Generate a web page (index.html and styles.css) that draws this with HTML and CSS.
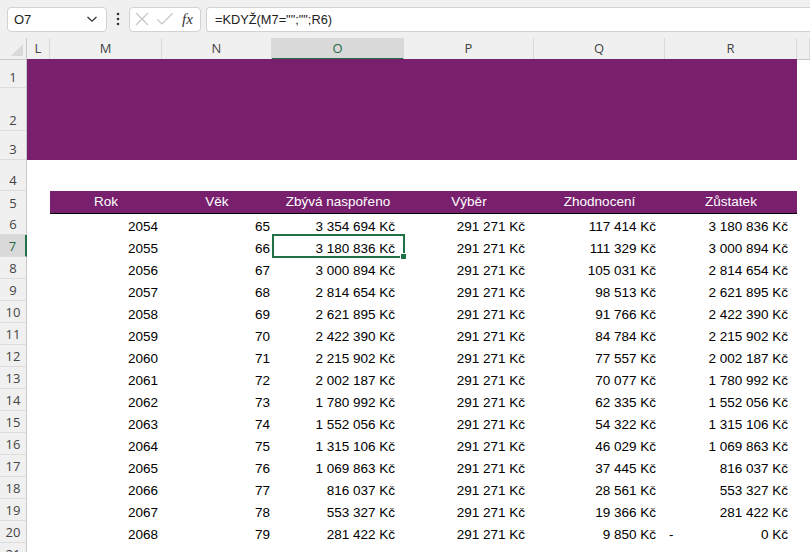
FILE: index.html
```html
<!DOCTYPE html>
<html lang="cs">
<head>
<meta charset="utf-8">
<title>Excel – výběr</title>
<link rel="stylesheet" href="styles.css">
</head>
<body>
<div class="app">
  <div class="formula-bar">
    <div class="namebox">
      <span class="nb-text">O7</span>
      <svg class="chev" width="12" height="8" viewBox="0 0 12 8"><polyline points="1.5,2 6,6.2 10.5,2" fill="none" stroke="#333" stroke-width="1.3"/></svg>
    </div>
    <div class="vdots">
      <svg width="4" height="14" viewBox="0 0 4 14"><circle cx="2" cy="2" r="1.3" fill="#333"/><circle cx="2" cy="7" r="1.3" fill="#333"/><circle cx="2" cy="12" r="1.3" fill="#333"/></svg>
    </div>
    <div class="fxbox">
      <svg width="16" height="16" viewBox="0 0 16 16"><path d="M2 2 L14 14 M14 2 L2 14" stroke="#c4c4c4" stroke-width="1.2" fill="none"/></svg>
      <svg width="18" height="16" viewBox="0 0 18 16"><path d="M1.5 8.5 L6 13 L16.5 2.5" stroke="#c4c4c4" stroke-width="1.2" fill="none"/></svg>
      <span class="fx">fx</span>
    </div>
    <div class="formula-input">=KDYŽ(M7="";"";R6)</div>
  </div>

  <div class="sheet">
    <div class="row colheads">
      <div class="corner"><span class="tri"></span></div>
      <div class="ch">L</div>
      <div class="ch">M</div>
      <div class="ch">N</div>
      <div class="ch active">O</div>
      <div class="ch">P</div>
      <div class="ch">Q</div>
      <div class="ch">R</div>
      <div class="ch"></div>
    </div>

    <div class="row r1"><div class="rh">1</div><div class="band"></div></div>
    <div class="row r2"><div class="rh">2</div><div class="band"></div></div>
    <div class="row r3"><div class="rh">3</div><div class="band"></div></div>
    <div class="row r4"><div class="rh">4</div></div>

    <div class="row rd">
      <div class="rh">5</div>
      <div></div>
      <div class="th">Rok</div>
      <div class="th">Věk</div>
      <div class="th">Zbývá naspořeno</div>
      <div class="th">Výběr</div>
      <div class="th">Zhodnocení</div>
      <div class="th">Zůstatek</div>
    </div>

    <div class="row rd"><div class="rh">6</div><div></div><div class="c yr">2054</div><div class="c ag">65</div><div class="c cur">3&nbsp;354&nbsp;694&nbsp;Kč</div><div class="c cur">291&nbsp;271&nbsp;Kč</div><div class="c cur">117&nbsp;414&nbsp;Kč</div><div class="c cur">3&nbsp;180&nbsp;836&nbsp;Kč</div></div>
    <div class="row rd"><div class="rh sel">7</div><div></div><div class="c yr">2055</div><div class="c ag">66</div><div class="c cur selected">3&nbsp;180&nbsp;836&nbsp;Kč<span class="handle"></span></div><div class="c cur">291&nbsp;271&nbsp;Kč</div><div class="c cur">111&nbsp;329&nbsp;Kč</div><div class="c cur">3&nbsp;000&nbsp;894&nbsp;Kč</div></div>
    <div class="row rd"><div class="rh">8</div><div></div><div class="c yr">2056</div><div class="c ag">67</div><div class="c cur">3&nbsp;000&nbsp;894&nbsp;Kč</div><div class="c cur">291&nbsp;271&nbsp;Kč</div><div class="c cur">105&nbsp;031&nbsp;Kč</div><div class="c cur">2&nbsp;814&nbsp;654&nbsp;Kč</div></div>
    <div class="row rd"><div class="rh">9</div><div></div><div class="c yr">2057</div><div class="c ag">68</div><div class="c cur">2&nbsp;814&nbsp;654&nbsp;Kč</div><div class="c cur">291&nbsp;271&nbsp;Kč</div><div class="c cur">98&nbsp;513&nbsp;Kč</div><div class="c cur">2&nbsp;621&nbsp;895&nbsp;Kč</div></div>
    <div class="row rd"><div class="rh">10</div><div></div><div class="c yr">2058</div><div class="c ag">69</div><div class="c cur">2&nbsp;621&nbsp;895&nbsp;Kč</div><div class="c cur">291&nbsp;271&nbsp;Kč</div><div class="c cur">91&nbsp;766&nbsp;Kč</div><div class="c cur">2&nbsp;422&nbsp;390&nbsp;Kč</div></div>
    <div class="row rd"><div class="rh">11</div><div></div><div class="c yr">2059</div><div class="c ag">70</div><div class="c cur">2&nbsp;422&nbsp;390&nbsp;Kč</div><div class="c cur">291&nbsp;271&nbsp;Kč</div><div class="c cur">84&nbsp;784&nbsp;Kč</div><div class="c cur">2&nbsp;215&nbsp;902&nbsp;Kč</div></div>
    <div class="row rd"><div class="rh">12</div><div></div><div class="c yr">2060</div><div class="c ag">71</div><div class="c cur">2&nbsp;215&nbsp;902&nbsp;Kč</div><div class="c cur">291&nbsp;271&nbsp;Kč</div><div class="c cur">77&nbsp;557&nbsp;Kč</div><div class="c cur">2&nbsp;002&nbsp;187&nbsp;Kč</div></div>
    <div class="row rd"><div class="rh">13</div><div></div><div class="c yr">2061</div><div class="c ag">72</div><div class="c cur">2&nbsp;002&nbsp;187&nbsp;Kč</div><div class="c cur">291&nbsp;271&nbsp;Kč</div><div class="c cur">70&nbsp;077&nbsp;Kč</div><div class="c cur">1&nbsp;780&nbsp;992&nbsp;Kč</div></div>
    <div class="row rd"><div class="rh">14</div><div></div><div class="c yr">2062</div><div class="c ag">73</div><div class="c cur">1&nbsp;780&nbsp;992&nbsp;Kč</div><div class="c cur">291&nbsp;271&nbsp;Kč</div><div class="c cur">62&nbsp;335&nbsp;Kč</div><div class="c cur">1&nbsp;552&nbsp;056&nbsp;Kč</div></div>
    <div class="row rd"><div class="rh">15</div><div></div><div class="c yr">2063</div><div class="c ag">74</div><div class="c cur">1&nbsp;552&nbsp;056&nbsp;Kč</div><div class="c cur">291&nbsp;271&nbsp;Kč</div><div class="c cur">54&nbsp;322&nbsp;Kč</div><div class="c cur">1&nbsp;315&nbsp;106&nbsp;Kč</div></div>
    <div class="row rd"><div class="rh">16</div><div></div><div class="c yr">2064</div><div class="c ag">75</div><div class="c cur">1&nbsp;315&nbsp;106&nbsp;Kč</div><div class="c cur">291&nbsp;271&nbsp;Kč</div><div class="c cur">46&nbsp;029&nbsp;Kč</div><div class="c cur">1&nbsp;069&nbsp;863&nbsp;Kč</div></div>
    <div class="row rd"><div class="rh">17</div><div></div><div class="c yr">2065</div><div class="c ag">76</div><div class="c cur">1&nbsp;069&nbsp;863&nbsp;Kč</div><div class="c cur">291&nbsp;271&nbsp;Kč</div><div class="c cur">37&nbsp;445&nbsp;Kč</div><div class="c cur">816&nbsp;037&nbsp;Kč</div></div>
    <div class="row rd"><div class="rh">18</div><div></div><div class="c yr">2066</div><div class="c ag">77</div><div class="c cur">816&nbsp;037&nbsp;Kč</div><div class="c cur">291&nbsp;271&nbsp;Kč</div><div class="c cur">28&nbsp;561&nbsp;Kč</div><div class="c cur">553&nbsp;327&nbsp;Kč</div></div>
    <div class="row rd"><div class="rh">19</div><div></div><div class="c yr">2067</div><div class="c ag">78</div><div class="c cur">553&nbsp;327&nbsp;Kč</div><div class="c cur">291&nbsp;271&nbsp;Kč</div><div class="c cur">19&nbsp;366&nbsp;Kč</div><div class="c cur">281&nbsp;422&nbsp;Kč</div></div>
    <div class="row rd"><div class="rh">20</div><div></div><div class="c yr">2068</div><div class="c ag">79</div><div class="c cur">281&nbsp;422&nbsp;Kč</div><div class="c cur">291&nbsp;271&nbsp;Kč</div><div class="c cur">9&nbsp;850&nbsp;Kč</div><div class="c cur split"><span>-</span><span>0&nbsp;Kč</span></div></div>
    <div class="row rd"><div class="rh">21</div></div>
  </div>
</div>
</body>
</html>
```

FILE: styles.css
```css
html, body {
  margin: 0;
  padding: 0;
  background: #ffffff;
  overflow: hidden;
}

.app {
  width: 810px;
  height: 552px;
  overflow: hidden;
  font-family: "Liberation Sans", Arial, sans-serif;
  color: #000;
}

/* ---------- formula bar ---------- */
.formula-bar {
  height: 38px;
  box-sizing: border-box;
  display: flex;
  align-items: center;
  padding-left: 7px;
  background: #f0f0f0;
}

.namebox {
  width: 100px;
  height: 25px;
  box-sizing: border-box;
  background: #fff;
  border: 1px solid #d2d2d2;
  border-radius: 4px;
  display: flex;
  align-items: center;
  justify-content: space-between;
  padding: 0 8px 0 6px;
  font-size: 13px;
  color: #222;
}

.vdots {
  width: 22px;
  display: flex;
  justify-content: center;
  align-items: center;
}

.fxbox {
  width: 72px;
  height: 25px;
  box-sizing: border-box;
  background: #fff;
  border: 1px solid #d2d2d2;
  border-radius: 4px;
  display: flex;
  align-items: center;
  gap: 6px;
  padding-left: 4px;
}

.fx {
  font-family: "Liberation Serif", "DejaVu Serif", serif;
  font-style: italic;
  font-size: 15px;
  color: #333;
  margin-left: 2px;
}

.formula-input {
  flex: 1;
  height: 25px;
  box-sizing: border-box;
  margin-left: 5px;
  background: #fff;
  border: 1px solid #d2d2d2;
  border-right: none;
  border-radius: 4px 0 0 4px;
  padding-left: 8px;
  font-size: 12.8px;
  line-height: 23px;
  color: #222;
}

/* ---------- sheet ---------- */
.sheet {
  --cols: 27px 23px 112px 110px 132px 130px 131px 132px 1fr;
}

.row {
  display: grid;
  grid-template-columns: var(--cols);
}

.colheads {
  height: 21px;
  background: #f0f0f0;
}

.colheads > div {
  box-sizing: border-box;
  border-bottom: 1px solid #c8c8c8;
  border-right: 1px solid #dadada;
}

.corner {
  position: relative;
  border-right: 1px solid #c8c8c8 !important;
}

.tri {
  position: absolute;
  right: 3px;
  bottom: 3px;
  width: 0;
  height: 0;
  border-left: 12px solid transparent;
  border-bottom: 12px solid #d9d9d9;
}

.ch {
  font-family: "Open Sans", "Noto Sans", sans-serif;
  font-size: 13px;
  color: #444;
  text-align: center;
  line-height: 21px;
}

.ch.active {
  background: #d9d9d9;
  color: #1e6b45;
  border-bottom: 2px solid #1f7246 !important;
  line-height: 20px;
}

.rh {
  grid-column: 1;
  box-sizing: border-box;
  background: #f0f0f0;
  border-right: 1px solid #c8c8c8;
  border-bottom: 1px solid #dcdcdc;
  font-family: "Open Sans", "Noto Sans", sans-serif;
  font-size: 13px;
  color: #444;
  display: flex;
  justify-content: center;
  align-items: flex-end;
  line-height: 16px;
  padding-bottom: 2px;
}

.rh.sel {
  background: #d9d9d9;
  color: #1e6b45;
  border-right: 2px solid #1f7246;
}

.r1 { height: 29px; }
.r2 { height: 43px; }
.r3 { height: 29px; }
.r4 { height: 31px; }
.rd { height: 22px; }

.band {
  grid-column: 2 / 9;
  background: #78206e;
}

.th {
  box-sizing: border-box;
  background: #78206e;
  border-bottom: 1px solid #000;
  color: #fff;
  font-size: 13.5px;
  text-align: center;
  line-height: 22px;
}

.c {
  font-size: 13.5px;
  line-height: 16px;
  display: flex;
  align-items: flex-end;
  justify-content: flex-end;
  white-space: nowrap;
}

.yr { padding-right: 4px; }
.ag { padding-right: 2px; }
.cur { padding-right: 9px; }

.split {
  justify-content: space-between;
  padding-left: 4px;
}

.selected {
  position: relative;
}

.selected::after {
  content: "";
  position: absolute;
  left: 0;
  top: -1px;
  right: -1px;
  bottom: -1px;
  border: 2px solid #1f7246;
}

.handle {
  position: absolute;
  right: -3px;
  bottom: -3px;
  width: 5px;
  height: 5px;
  background: #1f7246;
  border: 1px solid #fff;
  z-index: 2;
}
```
